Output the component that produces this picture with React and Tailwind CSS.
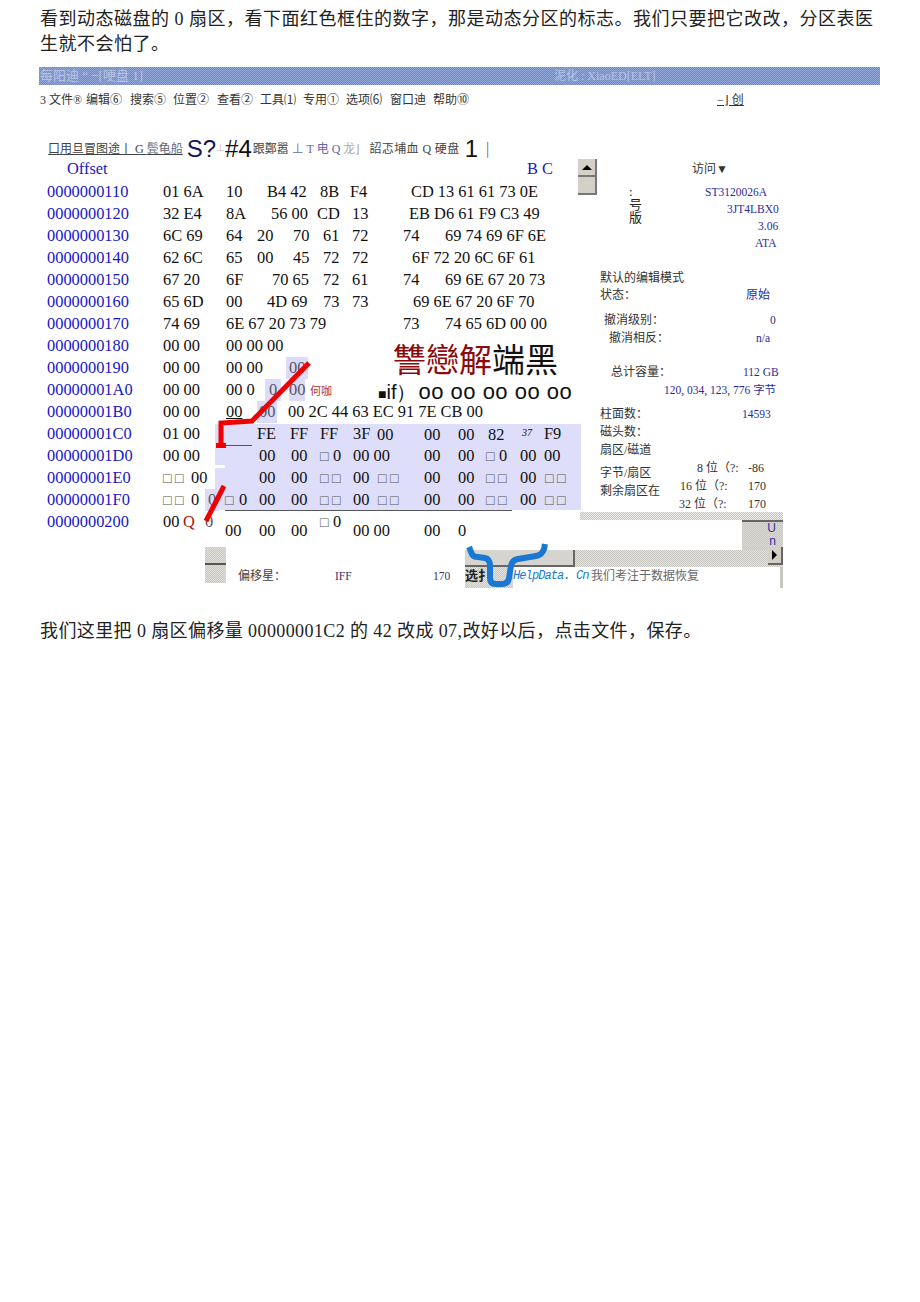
const serif = '"Liberation Serif", "Noto Sans CJK SC", serif';

const hl = 'bg-[#dcdcf8] text-[#555566]';
const box = 'text-[#555] text-[14px]';

// each row: hex tokens as [x on page, text, extra classes]
const hexRows = [
  ['0000000110', [[163, '01 6A'], [226, '10'], [267, 'B4 42'], [320, '8B'], [350, 'F4'], [411, 'CD 13 61 61 73 0E']]],
  ['0000000120', [[163, '32 E4'], [226, '8A'], [271, '56 00'], [317, 'CD'], [352, '13'], [409, 'EB D6 61 F9 C3 49']]],
  ['0000000130', [[163, '6C 69'], [226, '64'], [257, '20'], [293, '70'], [323, '61'], [352, '72'], [403, '74'], [445, '69 74 69 6F 6E']]],
  ['0000000140', [[163, '62 6C'], [226, '65'], [257, '00'], [293, '45'], [323, '72'], [352, '72'], [412, '6F 72 20 6C 6F 61']]],
  ['0000000150', [[163, '67 20'], [226, '6F'], [272, '70 65'], [323, '72'], [352, '61'], [403, '74'], [445, '69 6E 67 20 73']]],
  ['0000000160', [[163, '65 6D'], [226, '00'], [267, '4D 69'], [323, '73'], [352, '73'], [413, '69 6E 67 20 6F 70']]],
  ['0000000170', [[163, '74 69'], [226, '6E 67 20 73 79'], [403, '73'], [445, '74 65 6D 00 00']]],
  ['0000000180', [[163, '00 00'], [226, '00 00 00']]],
  ['0000000190', [[163, '00 00'], [226, '00 00'], [286, '00', hl + ' px-[3px]']]],
  ['00000001A0', [[163, '00 00'], [226, '00 0'], [265, '0', hl + ' px-[4px]'], [289, '00', hl], [310, '何咖', 'text-[11px] text-[#b03030]']]],
  ['00000001B0', [[163, '00 00'], [226, '00', 'underline'], [257, '00', hl + ' px-[2px]'], [288, '00 2C 44 63 EC 91 7E CB 00']]],
  ['00000001C0', [[163, '01 00'], [257, 'FE'], [290, 'FF'], [320, 'FF'], [353, '3F'], [377, '00', 'translate-y-px'], [424, '00', 'translate-y-px'], [458, '00', 'translate-y-px'], [488, '82', 'translate-y-px'], [522, '37', 'italic text-[10px] -translate-y-[3px]'], [544, 'F9']]],
  ['00000001D0', [[163, '00 00'], [259, '00'], [291, '00'], [320, '□', box], [333, '0'], [353, '00 00'], [424, '00'], [458, '00'], [486, '□', box], [499, '0'], [520, '00'], [544, '00']]],
  ['00000001E0', [[163, '□ □', box], [191, '00'], [259, '00'], [291, '00'], [320, '□ □', box], [353, '00'], [378, '□ □', box], [424, '00'], [458, '00'], [486, '□ □', box], [520, '00'], [545, '□ □', box]]],
  ['00000001F0', [[163, '□ □', box], [191, '0'], [205, '0', hl + ' px-[3px]'], [225, '□', box], [239, '0'], [259, '00'], [291, '00'], [320, '□ □', box], [353, '00'], [378, '□ □', box], [424, '00'], [458, '00'], [486, '□ □', box], [520, '00'], [545, '□ □', box]]],
  ['0000000200', [[163, '00'], [183, 'Q', 'text-[#a01818]'], [205, '0', 'text-[#555]'], [225, '00', 'translate-y-[9px]'], [259, '00', 'translate-y-[9px]'], [291, '00', 'translate-y-[9px]'], [320, '□', box], [333, '0'], [353, '00 00', 'translate-y-[9px]'], [424, '00', 'translate-y-[9px]'], [458, '0', 'translate-y-[9px]']]],
];

const menu = [
  [40, '3 文件®'], [86, '编辑⑥'], [130, '搜索⑤'], [173, '位置②'], [217, '查看②'], [260, '工具⑴'],
  [303, '专用①'], [346, '选项⑹'], [390, '窗口迪'], [433, '帮助⑩'], [717, '−⌋ 创', 'underline'],
];

const blue = 'text-[#2a2aa0] text-[11.5px]';
const panelRows = [
  [192, [[705, 'ST3120026A', blue]]],
  [209, [[727, '3JT4LBX0', blue]]],
  [226, [[758, '3.06', blue]]],
  [243, [[755, 'ATA', blue]]],
  [278, [[600, '默认的编辑模式']]],
  [295, [[600, '状态：'], [746, '原始', blue + ' text-[12px]']]],
  [320, [[604, '撤消级别：'], [770, '0', blue]]],
  [338, [[609, '撤消相反：'], [756, 'n/a', blue]]],
  [372, [[611, '总计容量：'], [743, '112 GB', blue]]],
  [390, [[664, '120, 034, 123, 776 字节', blue]]],
  [414, [[600, '柱面数：'], [742, '14593', blue]]],
  [432, [[600, '磁头数：']]],
  [450, [[600, '扇区/磁道']]],
  [468, [[697, '8 位（?:'], [748, '-86']]],
  [486, [[680, '16 位（?:'], [748, '170']]],
  [504, [[679, '32 位（?:'], [748, '170']]],
];

// tokens sit in a flex row, each one as wide as the gap to the next token
const Tokens = ({ cells, from = 0 }) => (
  <>
    {cells.map(([x, text, cls], i) => {
      const next = cells[i + 1];
      return (
        <span
          key={x}
          className="shrink-0 whitespace-nowrap"
          style={{ marginLeft: i === 0 ? x - from : 0, width: next ? next[0] - x : undefined }}
        >
          <span className={`inline-block ${cls || ''}`}>{text}</span>
        </span>
      );
    })}
  </>
);

const Scrollbar = () => (
  <div className="flex w-[19px] flex-col">
    <div className="flex h-[18px] items-center justify-center border-b-2 border-r-2 border-[#777] bg-[#d4d0c8]">
      <div className="h-0 w-0 border-x-[5px] border-b-[5px] border-x-transparent border-b-black" />
    </div>
    <div className="h-[18px] border-b-2 border-r-2 border-[#777] bg-[#d4d0c8]" />
  </div>
);

export default function App() {
  return (
    <div className="relative h-[1302px] w-[920px] overflow-hidden bg-white text-black" style={{ fontFamily: serif }}>
      <p className="pl-[40px] pt-[7px] text-[18px] leading-[25px] tracking-[0.5px] text-[#222] whitespace-nowrap">
        看到动态磁盘的 0 扇区，看下面红色框住的数字，那是动态分区的标志。我们只要把它改改，分区表医
        <br />
        生就不会怕了。
      </p>

      <div className="relative mt-[10px] h-[525px]">
        {/* lavender selection behind the hex rows */}
        <div className="absolute left-[215px] top-[357px] h-[86px] w-[366px] bg-[#dedefa]" />
        <div className="absolute left-[215px] top-[398px] h-[3px] w-[10px] bg-white" />
        <div className="absolute left-[225px] top-[443px] h-px w-[287px] bg-[#555]" />
        <div className="absolute left-[222px] top-[378px] h-px w-[30px] bg-[#555]" />

        <div className="relative flex h-[18px] items-center ml-[39px] w-[841px] bg-[repeating-conic-gradient(#6f88c6_0%_25%,#93a7d8_0%_50%)] bg-[length:2px_2px] text-[12px] text-[#b8c5e6]">
          <span className="ml-px w-[514px] text-[13px]">每阳迪 “ −[哽盘 1]</span>
          <span>泥化 : XiaoED[ELT]</span>
        </div>

        <div className="relative mt-[6px] flex h-[18px] items-center text-[12px] text-[#333]">
          <Tokens cells={menu} />
        </div>

        <div className="relative mt-[25px] flex h-[30px] items-center whitespace-nowrap pl-[48px] text-[12px] text-[#444]">
          <span className="underline decoration-[#444]">口用旦冒图途丨 G <span className="text-[#667]">鬓龟船</span></span>
          <span className="ml-[4px] text-[24px] leading-none text-[#14145a]" style={{ fontFamily: '"Liberation Sans", sans-serif' }}>S?</span>
          <span className="text-[9px] text-[#bbb]">⊥</span>
          <span className="text-[24px] leading-none text-[#111]" style={{ fontFamily: '"Liberation Sans", sans-serif' }}>#4</span>
          <span className="ml-[1px]">跟鄭嚣</span>
          <span className="ml-[3px] text-[#66a]">⊥ T 电 Q <span className="text-[#aaa]">龙⌋</span></span>
          <span className="ml-[9px] tracking-[0.4px]">詔忑埔血 Q 硬盘</span>
          <span className="ml-[5px] text-[24px] leading-none text-[#111]" style={{ fontFamily: '"Liberation Sans", sans-serif' }}>1</span>
          <span className="ml-[8px] text-[16px] text-[#666]">|</span>
        </div>

        <div className="relative -mt-[3px] flex">
          <div className="w-[578px] shrink-0 text-[16.4px] leading-[22px]">
            <div className="flex h-[23px] -mt-[3px] text-[#1818c8]">
              <Tokens cells={[[67, 'Offset'], [527, 'B C']]} />
            </div>
            {hexRows.map(([addr, cells]) => (
              <div key={addr} className="flex h-[22px] text-[#111]">
                <span className="ml-[47px] w-[116px] shrink-0 text-[#1818c8]">{addr}</span>
                <Tokens cells={cells} from={163} />
              </div>
            ))}
          </div>

          <div className="-mt-[2px] shrink-0">
            <Scrollbar />
          </div>

          <div className="relative text-[12px] text-[#333]">
            <div className="absolute left-[95px] -top-[1px] text-[12px] whitespace-nowrap">访问▼</div>
            <div className="absolute left-[32px] top-[24px] w-[14px] text-[13px] leading-[13px] text-[#222]">
              : 号 版
            </div>
          </div>
        </div>

        {/* right hand info panel */}
        <div className="absolute inset-x-0 top-[116px] text-[12px] text-[#333]">
          {panelRows.map(([y, cells], i) => (
            <div
              key={y}
              className="flex h-[18px] items-center"
              style={{ marginTop: i === 0 ? 0 : y - panelRows[i - 1][0] - 18 }}
            >
              <Tokens cells={cells} />
            </div>
          ))}
        </div>
        <div className="absolute left-[600px] top-[397px] text-[12px] leading-[18px] text-[#333]">
          字节/扇区
          <br />
          剩余扇区在
        </div>

        {/* big overlaid glyphs from the scan */}
        <div className="absolute left-[393px] top-[273px] text-[33px] leading-[36px] whitespace-nowrap text-[#8c0a0a]" style={{ fontFamily: '"Noto Sans CJK SC", sans-serif' }}>
          讐戀解<span className="text-[#111]">端黑</span>
        </div>
        <div className="absolute left-[378px] top-[311px] text-[20px] leading-[28px] whitespace-nowrap text-[#111]" style={{ fontFamily: '"Liberation Sans", sans-serif' }}>
          <span className="text-[14px]">■</span>if）<span className="ml-[2px] text-[22px] tracking-[0.5px]">oo oo oo oo oo</span>
        </div>

        {/* red marker drawn over the hex rows */}
        <svg className="absolute left-0 top-0" width="920" height="525" fill="none">
          <path d="M309 296 L252 354 L221 356 L221 380" stroke="#f00000" strokeWidth="5" />
          <rect x="216" y="376" width="10" height="5" fill="#f00000" />
          <path d="M224 419 L206 454" stroke="#f00000" strokeWidth="5" />
        </svg>

        {/* bottom scrollbar and status fragments */}
        <div className="absolute left-[205px] top-[480px] flex h-[36px] w-[21px] flex-col">
          <div className="h-[16px] bg-[repeating-conic-gradient(#c8c6c0_0%_25%,#e2e0da_0%_50%)] bg-[length:2px_2px]" />
          <div className="h-[2px] bg-[#555]" />
          <div className="h-[18px] bg-[repeating-conic-gradient(#c8c6c0_0%_25%,#e2e0da_0%_50%)] bg-[length:2px_2px]" />
        </div>
        <div className="absolute left-[580px] top-[445px] h-[8px] w-[203px] bg-[repeating-conic-gradient(#c8c6c0_0%_25%,#eeece8_0%_50%)] bg-[length:2px_2px]" />
        <div className="absolute left-[742px] top-[453px] flex h-[30px] w-[41px] flex-col items-end border-t-2 border-[#666] bg-[repeating-conic-gradient(#c8c6c0_0%_25%,#dcdad4_0%_50%)] bg-[length:2px_2px] pr-[7px] text-[12px] leading-[13px] text-[#3030a0]" style={{ fontFamily: '"Liberation Sans", sans-serif' }}>
          <span>U</span>
          <span>n</span>
        </div>
        <div className="absolute left-[465px] top-[483px] h-[17px] w-[318px] bg-[repeating-conic-gradient(#c8c6c0_0%_25%,#e6e4de_0%_50%)] bg-[length:2px_2px]" />
        <div className="absolute left-[465px] top-[483px] h-[17px] w-[110px] border-b-2 border-r-2 border-[#666] bg-[#d6d4ce]" />
        <div className="absolute left-[768px] top-[480px] flex h-[18px] w-[15px] items-center justify-center border-b-2 border-r-2 border-[#666] bg-[#d4d0c8]">
          <div className="h-0 w-0 border-y-[5px] border-l-[5px] border-y-transparent border-l-black" />
        </div>
        <div className="absolute left-[780px] top-[500px] h-[21px] w-[3px] bg-[#c8c6c0]" />
        <div className="absolute left-[465px] top-[500px] h-[21px] w-[48px] bg-[repeating-conic-gradient(#c8c6c0_0%_25%,#e6e4de_0%_50%)] bg-[length:2px_2px]" />

        <div className="absolute left-[238px] top-[500px] text-[12px] leading-[18px] text-[#444]">偏移星：</div>
        <div className="absolute left-[335px] top-[500px] text-[11.5px] leading-[18px] text-[#33336a]">IFF</div>
        <div className="absolute left-[433px] top-[500px] text-[11.5px] leading-[18px] text-[#33336a]">170</div>
        <div className="absolute left-[465px] top-[500px] text-[13px] font-bold leading-[18px] text-[#222]">选扌</div>
        <svg className="absolute left-[460px] top-[475px]" width="100" height="50" fill="none">
          <path d="M9 5 L12 12 Q13 15 18 15 L25 16 Q30 17 30 24 L30 36 Q30 42 36 42 L42 42 Q48 42 49 36 L51 24 Q52 18 58 17 L76 14 Q82 13 84 7 L85 2" stroke="#1a78d4" strokeWidth="6" />
        </svg>
        <div className="absolute left-[513px] top-[500px] whitespace-nowrap text-[12px] leading-[18px] italic tracking-[-0.9px] text-[#1a78c8]" style={{ fontFamily: '"Liberation Mono", monospace' }}>HelpData. Cn</div>
        <div className="absolute left-[591px] top-[500px] whitespace-nowrap text-[12px] leading-[18px] text-[#666]">我们考注于数据恢复</div>
      </div>

      <p className="mt-[26px] pl-[40px] text-[18px] leading-[26px] tracking-[0.4px] text-[#222] whitespace-nowrap">
        我们这里把 0 扇区偏移量 00000001C2 的 42 改成 07,改好以后，点击文件，保存。
      </p>
    </div>
  );
}
